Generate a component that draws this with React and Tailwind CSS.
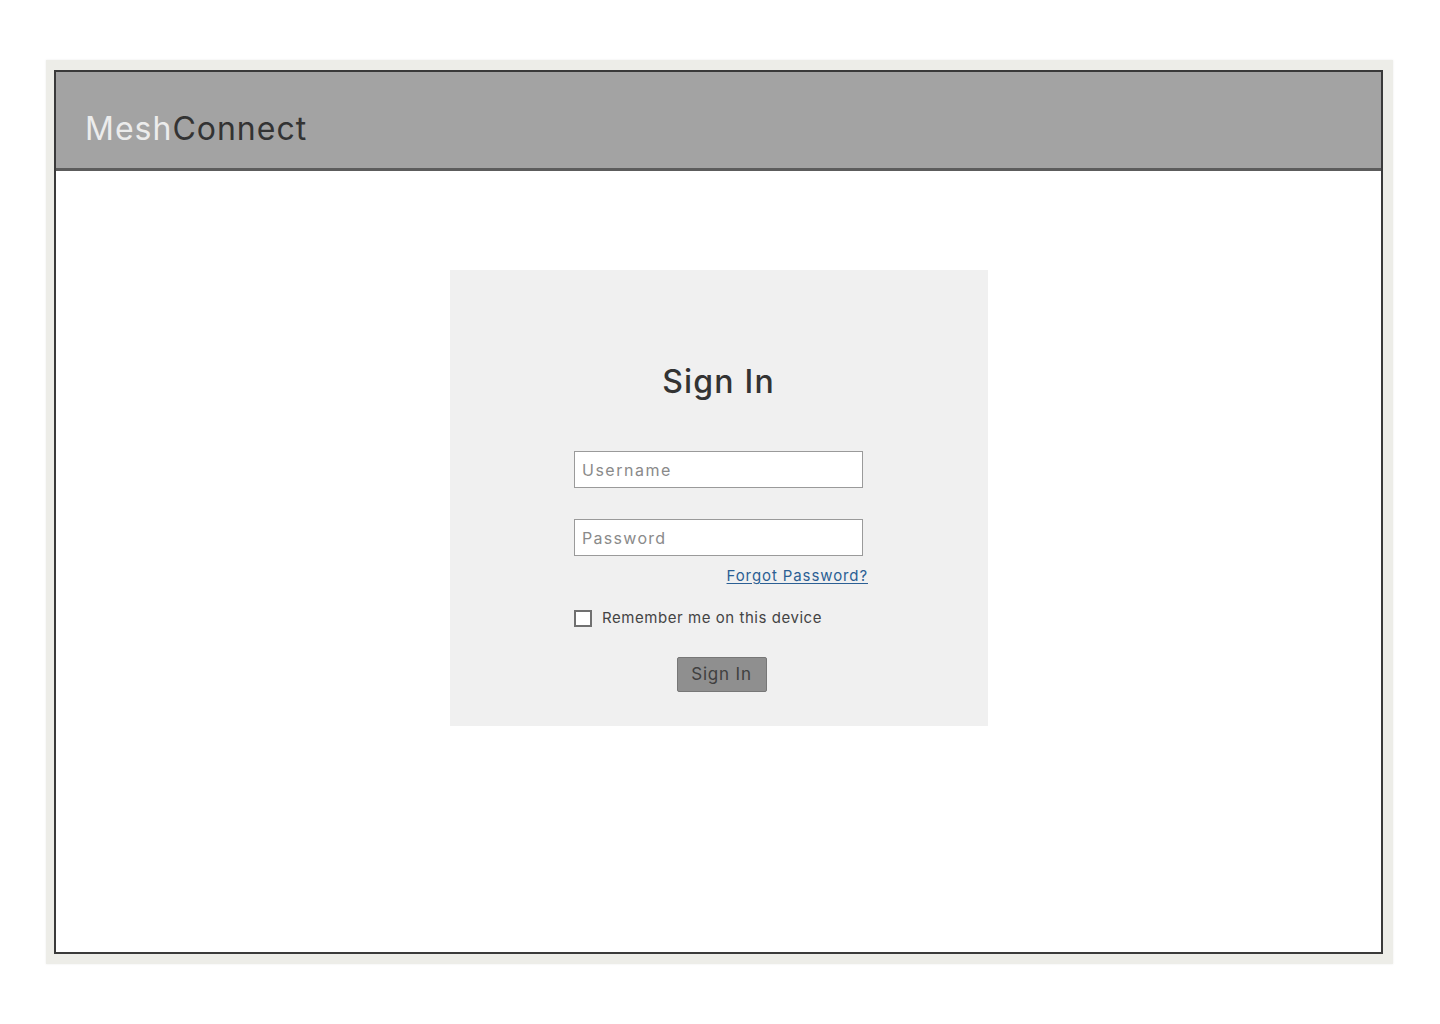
export default function App() {
  const font = { fontFamily: 'Inter, "Noto Sans", sans-serif' };
  return (
    <div className="min-h-[1024px] w-[1440px] bg-white pt-[60px]" style={font}>
      <div className="ml-[46px] h-[904px] w-[1347px] bg-[#ededE8] pt-[10px] pl-[8px] pr-[10px] pb-[10px] shadow-[0_0_2px_rgba(0,0,0,0.08)]">
        <div className="flex h-full flex-col border-2 border-[#3a3a3a] bg-white">
          <div className="flex h-[99px] items-end border-b-[3px] border-[#5c5c5c] bg-[#a3a3a3] pb-[19px] pl-[29px]">
            <span className="text-[32px] leading-[40px] tracking-[1px]">
              <span className="text-[#ececec]">Mesh</span>
              <span className="text-[#333333]">Connect</span>
            </span>
          </div>
          <div className="flex flex-1 justify-center pt-[99px]">
            <div className="flex h-[456px] w-[538px] flex-col items-center bg-[#f0f0f0] pt-[92px]">
              <h1 className="text-[32px] leading-[40px] font-medium tracking-[1.2px] text-[#333333]">Sign In</h1>
              <div className="mt-[49px] flex w-[289px] flex-col">
                <div className="flex h-[37px] items-center border-[1.5px] border-[#9a9a9a] bg-white px-[7px] text-[16px] tracking-[1.5px] text-[#8a8a8a]">Username</div>
                <div className="mt-[31px] flex h-[37px] items-center border-[1.5px] border-[#9a9a9a] bg-white px-[7px] text-[16px] tracking-[1.3px] text-[#8a8a8a]">Password</div>
                <div className="mr-[-5px] mt-[10px] flex justify-end">
                  <a className="text-[15px] leading-[20px] tracking-[0.9px] text-[#2b5f94] underline underline-offset-2">Forgot Password?</a>
                </div>
                <label className="mt-[22px] flex items-center gap-[10px]">
                  <span className="h-[17px] w-[18px] border-2 border-[#707070] bg-white" />
                  <span className="text-[15px] leading-[20px] tracking-[0.55px] text-[#444444]">Remember me on this device</span>
                </label>
              </div>
              <button className="ml-[6px] mt-[29px] h-[35px] w-[90px] rounded-[2px] border border-[#777777] bg-[#8f8f8f] text-[17px] tracking-[0.8px] text-[#404040]">Sign In</button>
            </div>
          </div>
        </div>
      </div>
    </div>
  );
}
